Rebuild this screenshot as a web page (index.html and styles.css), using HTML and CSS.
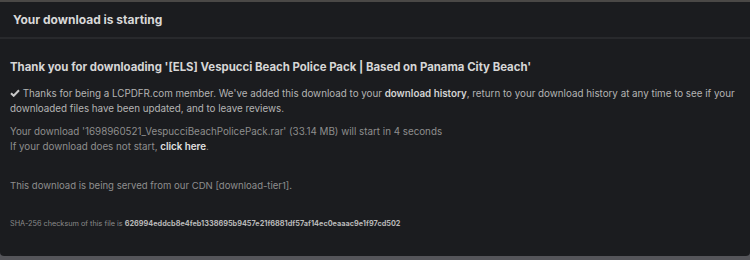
FILE: index.html
```html
<!DOCTYPE html>
<html lang="en">
<head>
    <meta charset="UTF-8">
    <meta name="viewport" content="width=device-width, initial-scale=1.0">
    <title>Your download is starting</title>
    <link rel="stylesheet" href="styles.css">
</head>
<body>
    <div class="dialog">
        <div class="dialog-header">Your download is starting</div>
        <div class="dialog-body">
            <h2>Thank you for downloading '[ELS] Vespucci Beach Police Pack | Based on Panama City Beach'</h2>
            <p class="member"><svg class="tick" width="10" height="8" viewBox="0 0 10 8"><path d="M1 4.2 L3.7 6.8 L9 1.2" fill="none" stroke="currentColor" stroke-width="2"/></svg> Thanks for being a LCPDFR.com member. We've added this download to your <b>download history</b>, return to your download history at any time to see if your downloaded files have been updated, and to leave reviews.</p>
            <p class="muted">
                Your download '1698960521_VespucciBeachPolicePack.rar' (33.14 MB) will start in 4 seconds<br>
                If your download does not start, <a href="#" class="link">click here</a>.
            </p>
            <p class="muted cdn">This download is being served from our CDN [download-tier1].</p>
            <p class="checksum">SHA-256 checksum of this file is <b>626994eddcb8e4feb1338695b9457e21f6881df57af14ec0eaaac9e1f97cd502</b></p>
        </div>
    </div>
</body>
</html>
```

FILE: styles.css
```css
body {
    margin: 0;
    height: 260px;
    background-color: #55555a;
    font-family: Inter, "Noto Sans", sans-serif;
    overflow: hidden;
}
.dialog {
    border-top: 2px solid #4a4846;
    background-color: #1b1c1f;
    height: 254px;
    border-radius: 0 0 4px 4px;
}
.dialog-header {
    height: 35px;
    line-height: 35px;
    padding: 0 13px;
    font-size: 12px;
    font-weight: 700;
    color: #d8d8d8;
    border-bottom: 2px solid #28292c;
}
.dialog-body {
    padding: 0 10px;
}
h2 {
    margin: 20px 0 0;
    font-size: 11.4px;
    line-height: 16px;
    font-weight: 700;
    color: #d6d6d6;
}
p {
    margin: 0;
    font-size: 9.8px;
    line-height: 15px;
}
.member {
    margin-top: 11px;
    color: #b4b4b4;
}
.member b {
    color: #d4d4d4;
    font-weight: 600;
}
.tick {
    color: #c8c8c8;
}
.muted {
    margin-top: 8px;
    color: #8e8e8e;
}
.link {
    color: #e0e0e0;
    font-weight: 600;
    text-decoration: none;
}
.cdn {
    margin-top: 24px;
    font-size: 9.55px;
}
.checksum {
    margin-top: 26px;
    font-size: 7.3px;
    line-height: 10px;
    color: #8a8a8a;
}
.checksum b {
    color: #b8b8b8;
}
```
